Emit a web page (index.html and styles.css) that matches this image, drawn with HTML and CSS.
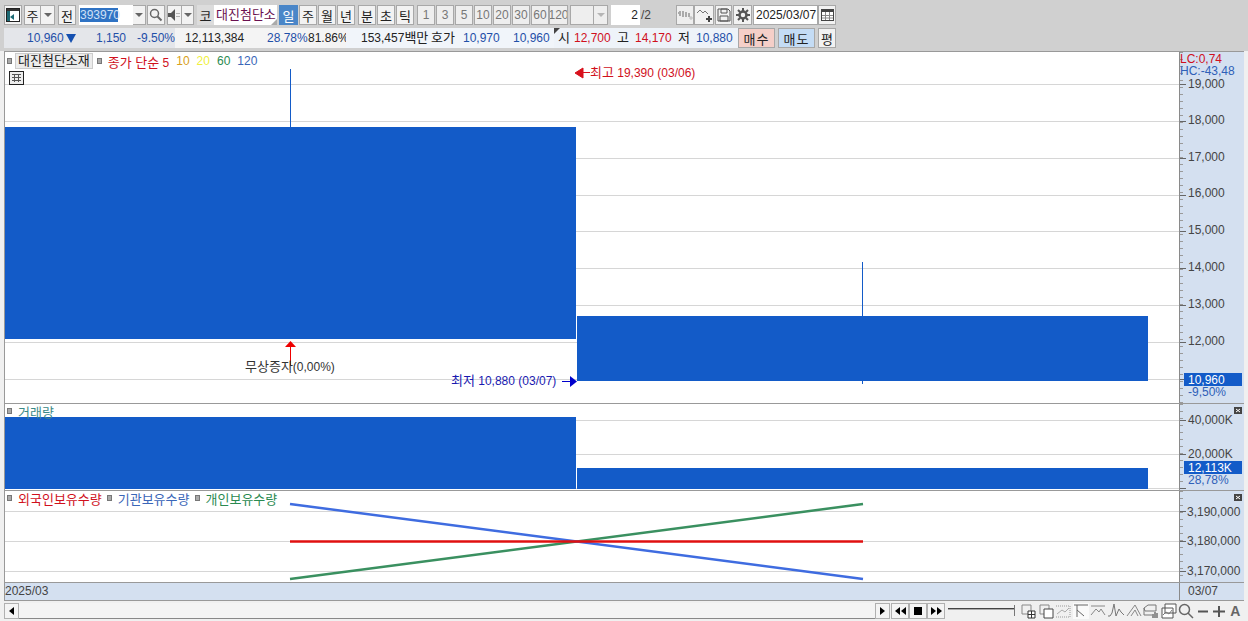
FILE: index.html
```html
<!DOCTYPE html>
<html lang="ko">
<head>
    <meta charset="UTF-8">
    <title>대진첨단소재 차트</title>
    <link rel="stylesheet" href="styles.css">
</head>
<body>
    <div class="toolbar">
        <div class="row row-top">
            <button class="btn w18"><svg width="14" height="14" viewBox="0 0 14 14"><rect x="0.5" y="0.5" width="13" height="13" fill="#fff" stroke="#222"/><rect x="1" y="1" width="12" height="2" fill="#333"/><rect x="1" y="3" width="3" height="10" fill="#1e6a74"/><path d="M4 9l4-3v6z" fill="#1e6a74"/></svg></button>
            <button class="btn w17 m2">주</button>
            <button class="btn dd w14"><i class="caret"></i></button>
            <button class="btn w18 m3">전</button>
            <div class="code m3"><span class="code-sel">393970</span></div>
            <button class="btn dd w13"><i class="caret"></i></button>
            <button class="btn w18 m1"><svg width="14" height="14" viewBox="0 0 14 14"><circle cx="5.5" cy="5.5" r="4" fill="none" stroke="#666" stroke-width="1.5"/><path d="M8.5 8.5l4 4" stroke="#666" stroke-width="2"/></svg></button>
            <button class="btn w15 m2"><svg width="13" height="12" viewBox="0 0 13 12"><path d="M0 4h3l4-4v12l-4-4h-3z" fill="#555"/><path d="M9 4v1M9 7v1M11 4v1M11 7v1" stroke="#777"/></svg></button>
            <button class="btn dd w12"><i class="caret"></i></button>
            <button class="btn btn-grey w17 m3">코</button>
            <div class="name">대진첨단소<i class="name-corner"></i></div>
            <button class="btn btn-on w19 m2">일</button>
            <button class="btn w18 m1">주</button>
            <button class="btn w18 m1">월</button>
            <button class="btn w18 m1">년</button>
            <button class="btn w18 m3">분</button>
            <button class="btn w18 m1">초</button>
            <button class="btn w18 m1">틱</button>
            <button class="btn btn-off w18 m3">1</button>
            <button class="btn btn-off w18 m1">3</button>
            <button class="btn btn-off w18 m1">5</button>
            <button class="btn btn-off w18 m1">10</button>
            <button class="btn btn-off w18 m1">20</button>
            <button class="btn btn-off w18 m1">30</button>
            <button class="btn btn-off w18 m1">60</button>
            <button class="btn btn-off w19">120</button>
            <button class="btn btn-off w24 m2"></button>
            <button class="btn btn-off dd w14"><i class="caret caret-off"></i></button>
            <div class="page m3">2</div>
            <span class="page-total">/2</span>
            <button class="btn btn-off w18 m21"><svg width="16" height="14" viewBox="0 0 16 14"><path d="M1 5h1M3 3v5M6 3v6M9 4v5M12 5v4" stroke="#aaa" stroke-width="2"/><path d="M12 10h4M14 8v4" stroke="#bbb"/></svg></button>
            <button class="btn w20"><svg width="16" height="14" viewBox="0 0 16 14"><path d="M1 5l3-3 3 3 2-2 3 3" fill="none" stroke="#777"/><path d="M10 11h6M13 8v6" stroke="#444" stroke-width="2"/></svg></button>
            <button class="btn w17 m1"><svg width="14" height="14" viewBox="0 0 14 14"><path d="M1 1h10l2 2v10h-12z" fill="none" stroke="#555"/><path d="M4 1h6v4h-6zM3 8h8v5h-8z" fill="none" stroke="#555"/></svg></button>
            <button class="btn w19 m1"><svg width="14" height="14" viewBox="0 0 14 14"><circle cx="7" cy="7" r="3.5" fill="none" stroke="#555" stroke-width="2.5"/><path d="M7 0v3M7 11v3M0 7h3M11 7h3M2 2l2 2M10 10l2 2M12 2l-2 2M2 12l2-2" stroke="#555" stroke-width="2"/></svg></button>
            <div class="date m1">2025/03/07</div>
            <button class="btn w18"><svg width="13" height="12" viewBox="0 0 13 12"><rect x="0.5" y="0.5" width="12" height="11" fill="#fff" stroke="#444"/><rect x="1" y="1" width="11" height="2" fill="#444"/><path d="M1 6.500h11M1 9h11M4.500 3v8M8.500 3v8" stroke="#888"/></svg></button>
        </div>
        <div class="row row-info">
            <div class="cell cell-price">
                <span class="t-blue p-a">10,960</span><i class="down"></i>
                <span class="t-blue p-b">1,150</span>
                <span class="t-blue p-c">-9.50%</span>
            </div>
            <div class="cell cell-vol">
                <span class="p-d">12,113,384</span>
                <span class="t-blue p-e">28.78%</span>
                <span class="p-f">81.86%</span>
            </div>
            <div class="cell cell-quote">
                <span class="p-g">153,457<b class="ko">백만</b></span>
                <span class="p-h ko">호가</span>
                <span class="t-blue p-i">10,970</span>
                <span class="t-blue p-j">10,960</span>
            </div>
            <div class="cell cell-ohl">
                <i class="corner"></i>
                <span class="p-k ko">시</span>
                <span class="t-red p-l">12,700</span>
                <span class="p-m ko">고</span>
                <span class="t-red p-n">14,170</span>
                <span class="p-o ko">저</span>
                <span class="t-blue p-p">10,880</span>
            </div>
            <button class="btn btn-buy">매수</button>
            <button class="btn btn-sell">매도</button>
            <button class="btn w18 m3">평</button>
        </div>
    </div>

    <div class="chart">
        <!-- 가격 -->
        <div class="pane pane-price">
            <div class="plot">
                <div class="legend">
                    <i class="dot"></i><span class="legend-name ko">대진첨단소재</span>
                    <i class="dot"></i><span class="t-red"><b class="ko">종가 단순</b> 5</span>
                    <span class="t-orange period">10</span>
                    <span class="t-yellow period">20</span>
                    <span class="t-green period">60</span>
                    <span class="t-steel period">120</span>
                </div>
                <svg class="table-icon" width="15" height="14" viewBox="0 0 15 14"><rect x="0.5" y="0.5" width="14" height="13" fill="#eee" stroke="#222"/><path d="M3 3.500h9M3 6.500h9M3 9.500h9M5.500 3v8M9.500 3v8" stroke="#555"/></svg>
                <svg class="canvas" width="1175" height="351" viewBox="4 52 1175 351">
                    <path class="grid" d="M5 84.500H1179M5 121.500H1179M5 158.500H1179M5 195.500H1179M5 231.500H1179M5 268.500H1179M5 305.500H1179M5 342.500H1179M5 379.500H1179"/>
                    <rect class="bar" x="5" y="127" width="571" height="212"/>
                    <rect class="bar" x="577" y="316" width="571" height="65"/>
                    <path class="wick" d="M290.500 69V127M862.500 262V384"/>
                    <path d="M583 68v10l-8-5zM583 72.500h7" class="arrow-red"/>
                    <text class="lbl t-red-fill" x="590" y="77"><tspan class="ko">최고</tspan> 19,390 (03/06)</text>
                    <path d="M290.500 365V346" stroke="#e00" fill="none"/>
                    <path d="M285 347l5.500-6 5.500 6z" fill="#e00"/>
                    <text class="lbl t-dark-fill" x="245" y="371"><tspan class="ko">무상증자</tspan>(0,00%)</text>
                    <text class="lbl t-navy-fill" x="451" y="385"><tspan class="ko">최저</tspan> 10,880 (03/07)</text>
                    <path d="M562 381.500h9" stroke="#00c"/>
                    <path d="M570 376l7 5.500-7 5.500z" fill="#00c"/>
                </svg>
            </div>
            <div class="axis">
                <svg class="canvas" width="64" height="351" viewBox="1180 52 64 351">
                    <path class="major" d="M1180 84.500h6M1180 121.500h6M1180 158.500h6M1180 195.500h6M1180 231.500h6M1180 268.500h6M1180 305.500h6M1180 342.500h6M1180 379.500h6"/>
                    <text class="lbl t-red-fill" x="1180" y="63">LC:0,74</text>
                    <text class="lbl t-steel-fill" x="1180" y="75">HC:-43,48</text>
                    <text class="lbl t-axis" x="1188" y="88">19,000</text>
                    <text class="lbl t-axis" x="1188" y="124">18,000</text>
                    <text class="lbl t-axis" x="1188" y="161">17,000</text>
                    <text class="lbl t-axis" x="1188" y="197">16,000</text>
                    <text class="lbl t-axis" x="1188" y="234">15,000</text>
                    <text class="lbl t-axis" x="1188" y="271">14,000</text>
                    <text class="lbl t-axis" x="1188" y="308">13,000</text>
                    <text class="lbl t-axis" x="1188" y="345">12,000</text>
                    <rect class="bar" x="1184" y="373" width="58" height="13"/>
                    <text class="lbl t-white" x="1188" y="384">10,960</text>
                    <text class="lbl t-steel-fill" x="1188" y="396">-9,50%</text>
                </svg>
            </div>
        </div>

        <!-- 거래량 -->
        <div class="pane pane-vol">
            <div class="plot">
                <div class="legend legend-low">
                    <i class="dot"></i><span class="t-teal ko">거래량</span>
                </div>
                <svg class="canvas" width="1175" height="86" viewBox="4 404 1175 86">
                    <path class="grid" d="M5 420.500H1179M5 454.500H1179M5 488.500H1179"/>
                    <rect class="bar" x="5" y="417" width="571" height="72"/>
                    <rect class="bar" x="577" y="468" width="571" height="21"/>
                </svg>
            </div>
            <div class="axis">
                <svg class="canvas" width="64" height="86" viewBox="1180 404 64 86">
                    <path class="major" d="M1180 420.500h6M1180 454.500h6M1180 488.500h6"/>
                    <rect class="close-box" x="1234" y="407" width="8" height="7"/>
                    <path d="M1236 409l4 3M1240 409l-4 3" stroke="#fff"/>
                    <text class="lbl t-axis" x="1188" y="424">40,000K</text>
                    <text class="lbl t-axis" x="1188" y="458">20,000K</text>
                    <rect class="bar" x="1184" y="461" width="58" height="13"/>
                    <text class="lbl t-white" x="1188" y="472">12,113K</text>
                    <text class="lbl t-steel-fill" x="1188" y="484">28,78%</text>
                </svg>
            </div>
        </div>

        <!-- 보유수량 -->
        <div class="pane pane-hold">
            <div class="plot">
                <div class="legend legend-low">
                    <i class="dot"></i><span class="t-red ko">외국인보유수량</span>
                    <i class="dot"></i><span class="t-steel ko">기관보유수량</span>
                    <i class="dot"></i><span class="t-green ko">개인보유수량</span>
                </div>
                <svg class="canvas" width="1175" height="91" viewBox="4 491 1175 91">
                    <path class="grid" d="M5 511.500H1179M5 541.500H1179M5 571.500H1179"/>
                    <path class="hold hold-green" d="M290 579L863 504"/>
                    <path class="hold hold-blue" d="M290 504L863 579"/>
                    <path class="hold hold-red" d="M290 541.500H863"/>
                </svg>
            </div>
            <div class="axis">
                <svg class="canvas" width="64" height="91" viewBox="1180 491 64 91">
                    <path class="major" d="M1180 511.500h6M1180 541.500h6M1180 571.500h6"/>
                    <rect class="close-box" x="1234" y="494" width="8" height="7"/>
                    <path d="M1236 496l4 3M1240 496l-4 3" stroke="#fff"/>
                    <text class="lbl t-axis" x="1187" y="516">3,190,000</text>
                    <text class="lbl t-axis" x="1187" y="545">3,180,000</text>
                    <text class="lbl t-axis" x="1187" y="575">3,170,000</text>
                </svg>
            </div>
        </div>

        <div class="datebar">
            <div class="datebar-left">2025/03</div>
            <div class="datebar-right">03/07</div>
        </div>
    </div>

    <div class="bottom">
        <button class="btn sb w15"><i class="tri-left"></i></button>
        <div class="track"></div>
        <button class="btn sb w15"><i class="tri-right"></i></button>
        <button class="btn sb w18 m1"><svg width="11" height="8" viewBox="0 0 11 8"><path d="M5 0v8l-5-4zM11 0v8l-5-4z"/></svg></button>
        <button class="btn sb w18"><svg width="8" height="8" viewBox="0 0 8 8"><rect width="8" height="8"/></svg></button>
        <button class="btn sb w18"><svg width="11" height="8" viewBox="0 0 11 8"><path d="M0 0v8l5-4zM6 0v8l5-4z"/></svg></button>
        <div class="slider"><i class="slider-line"></i><i class="slider-knob"></i></div>
        <div class="tools">
            <svg width="16" height="16" viewBox="0 0 16 16"><path d="M2 2h9v9H2z" fill="none" stroke="#888"/><path d="M8 8h7v7H8zM8 11.500h7M11.500 8v7" fill="#fff" stroke="#333"/></svg>
            <svg width="16" height="16" viewBox="0 0 16 16"><path d="M2 2h9v9H2z" fill="none" stroke="#888"/><path d="M6 6h9v9H6z" fill="#fff" stroke="#444"/></svg>
            <svg width="16" height="16" viewBox="0 0 16 16"><path d="M1 3h14M1 14h14M15 3v11" fill="none" stroke="#999" stroke-dasharray="1 1"/><path d="M2 11l5-4 3 2 4-4" fill="none" stroke="#aaa"/></svg>
            <svg class="tool-lit" width="16" height="16" viewBox="0 0 16 16"><path d="M1 2h14M4 2v12M4 7l7 6" fill="none" stroke="#666"/></svg>
            <svg width="16" height="16" viewBox="0 0 16 16"><path d="M1 3h14M1 12l5-6 3 3 2-3 4 6" fill="none" stroke="#888"/></svg>
            <svg width="16" height="16" viewBox="0 0 16 16"><path d="M0 13h2l2-3 2-9 2 12 3-7 2 3 3 3" fill="none" stroke="#777"/></svg>
            <svg width="16" height="16" viewBox="0 0 16 16"><path d="M1 13L9 2l6 11M5 13l4-6 3 6" fill="none" stroke="#888"/></svg>
            <svg width="16" height="16" viewBox="0 0 16 16"><path d="M1 5l4-3h8v6H2zM1 5v7h8" fill="none" stroke="#777"/><path d="M10 15v-4M12 15v-6M14 15v-5" stroke="#333"/></svg>
            <svg width="16" height="16" viewBox="0 0 16 16"><path d="M4 1h11v9H4zM1 5h11v10H1z" fill="#fff" stroke="#555"/><path d="M2 12l3-3 3 2 3-4" fill="none" stroke="#777"/></svg>
            <svg width="16" height="16" viewBox="0 0 16 16"><circle cx="6.500" cy="6.500" r="5" fill="none" stroke="#666" stroke-width="1.500"/><path d="M10 10l5 5" stroke="#666" stroke-width="1.500"/></svg>
            <svg width="14" height="16" viewBox="0 0 14 16"><path d="M2 8.500h10" stroke="#555" stroke-width="2"/></svg>
            <svg width="14" height="16" viewBox="0 0 14 16"><path d="M1 8.500h12M7 3v11" stroke="#555" stroke-width="2"/></svg>
            <span class="tool-a">A</span>
        </div>
    </div>
</body>
</html>
```
FILE: styles.css
```css
html, body {
    margin: 0;
    padding: 0;
}
body {
    width: 1248px;
    height: 621px;
    overflow: hidden;
    background-color: #f0f0f0;
    color: #222;
    font-family: "Liberation Sans", "Noto Sans CJK KR", sans-serif;
    font-size: 12px;
}
i {
    display: block;
}
b {
    font-weight: normal;
}
.ko {
    font-size: 13px;
}

/* 상단 툴바 */
.toolbar {
    height: 51px;
    box-sizing: border-box;
    padding: 5px 0 0 4px;
    background-color: #d0d0d0;
}
.row {
    display: flex;
    height: 20px;
}
.row-info {
    margin-top: 3px;
}
.btn {
    display: flex;
    align-items: center;
    justify-content: center;
    flex: none;
    height: 20px;
    margin: 0;
    padding: 0;
    box-sizing: border-box;
    background-color: #f2f2f2;
    border: 1px solid #a8a8a8;
    color: #222;
    font: inherit;
    font-size: 13px;
    overflow: hidden;
}
.btn-off {
    background-color: #eeeeee;
    color: #777;
    font-size: 12px;
}
.btn-grey {
    background-color: #dcdcdc;
    border-color: #dcdcdc;
}
.btn-on {
    background-color: #4a86c8;
    border-color: #4a86c8;
    color: #fff;
}
.dd {
    border-left: 0;
}
.caret {
    width: 0;
    height: 0;
    border-left: 4px solid transparent;
    border-right: 4px solid transparent;
    border-top: 4px solid #666;
}
.caret-off {
    border-top-color: #b5b5b5;
}
.w12 { width: 12px; }
.w13 { width: 13px; }
.w14 { width: 14px; }
.w15 { width: 15px; }
.w17 { width: 17px; }
.w18 { width: 18px; }
.w19 { width: 19px; }
.w20 { width: 20px; }
.w24 { width: 24px; }
.m1 { margin-left: 1px; }
.m2 { margin-left: 2px; }
.m3 { margin-left: 3px; }
.m21 { margin-left: 21px; }

.code {
    width: 54px;
    height: 20px;
    box-sizing: border-box;
    padding-top: 3px;
    background-color: #fff;
}
.code-sel {
    display: inline-block;
    width: 38px;
    height: 14px;
    margin-left: 1px;
    background-color: #2f73c4;
    color: #cfe0f5;
    line-height: 14px;
}
.name {
    position: relative;
    width: 63px;
    height: 20px;
    box-sizing: border-box;
    padding-left: 2px;
    background-color: #fff;
    color: #6a1050;
    font-size: 13px;
    line-height: 20px;
    white-space: nowrap;
    overflow: hidden;
}
.name-corner {
    position: absolute;
    right: 0;
    bottom: 0;
    border-left: 6px solid transparent;
    border-bottom: 6px solid #aaa;
}
.page {
    width: 29px;
    height: 20px;
    box-sizing: border-box;
    padding-right: 2px;
    background-color: #fff;
    text-align: right;
    line-height: 20px;
}
.page-total {
    width: 14px;
    line-height: 20px;
    margin-left: 1px;
    color: #444;
}
.date {
    width: 65px;
    height: 20px;
    box-sizing: border-box;
    padding-left: 2px;
    background-color: #fff;
    border: 1px solid #a8a8a8;
    line-height: 18px;
    white-space: nowrap;
}

/* 시세 줄 */
.cell {
    position: relative;
    flex: none;
    height: 20px;
    line-height: 20px;
    white-space: nowrap;
}
.cell span,
.down,
.corner {
    position: absolute;
    top: 0;
}
.cell-price {
    width: 171px;
    background-color: #e4e6ea;
}
.cell-vol {
    width: 171px;
    background-color: #f4f4f4;
}
.cell-quote {
    width: 208px;
    background-color: #f1f5fa;
}
.cell-ohl {
    width: 184px;
    background-color: #eef3f9;
}
.p-a { left: 23px; }
.down {
    left: 62px;
    top: 6px;
    border-left: 5px solid transparent;
    border-right: 5px solid transparent;
    border-top: 9px solid #1450b0;
}
.p-b { left: 92px; }
.p-c { left: 133px; }
.p-d { left: 10px; }
.p-e { left: 92px; }
.p-f { left: 133px; }
.p-g { left: 15px; }
.p-h { left: 85px; }
.p-i { left: 117px; }
.p-j { left: 167px; }
.corner {
    left: 0;
    top: 0;
    border-right: 6px solid transparent;
    border-top: 6px solid #444;
}
.p-k { left: 4px; }
.p-l { left: 20px; }
.p-m { left: 63px; }
.p-n { left: 81px; }
.p-o { left: 124px; }
.p-p { left: 142px; }
.btn-buy,
.btn-sell {
    width: 37px;
    letter-spacing: 1px;
}
.btn-buy {
    background-color: #f5cfc8;
}
.btn-sell {
    margin-left: 3px;
    background-color: #c4dcf5;
}
.t-blue { color: #1f4fa8; }
.t-red { color: #d0101c; }
.t-orange { color: #d8a020; }
.t-yellow { color: #f0f040; }
.t-green { color: #2a8a50; }
.t-steel { color: #3a66b8; }
.t-teal { color: #3a8a88; }

/* 차트 */
.chart {
    margin-left: 4px;
    width: 1240px;
    border-top: 1px solid #999;
    background-color: #fff;
    box-shadow: inset 1px 0 #999;
}
.pane {
    display: flex;
    border-bottom: 1px solid #999;
}
.pane-price { height: 351px; }
.pane-vol { height: 86px; }
.pane-hold { height: 91px; }
.plot {
    position: relative;
    width: 1175px;
    border-right: 1px solid #8a8a8a;
    overflow: hidden;
}
.axis {
    position: relative;
    width: 64px;
    background-color: #d4e0f0;
    background-image: repeating-linear-gradient(#9a9a9a 0 1px, transparent 1px 7px);
    background-size: 3px 100%;
    background-repeat: no-repeat;
    overflow: hidden;
}
.canvas {
    display: block;
}
.legend {
    position: absolute;
    z-index: 2;
    top: 0;
    left: 3px;
    display: flex;
    align-items: center;
    gap: 5px;
    height: 18px;
    white-space: nowrap;
}
.legend-low {
    top: -2px;
}
.legend-name {
    margin: 0 -1px 0 -3px;
    padding: 0 2px;
    background-color: #ececec;
    border: 1px solid #ccc;
    line-height: 14px;
}
.period {
    margin-left: 2px;
}
.dot {
    width: 3px;
    height: 4px;
    margin-right: 1px;
    background-color: #aaa;
    border: 1px solid #777;
}
.table-icon {
    position: absolute;
    z-index: 2;
    top: 19px;
    left: 5px;
}
.grid {
    stroke: #d6d6d6;
    fill: none;
}
.bar {
    fill: #135bc8;
}
.wick {
    stroke: #135bc8;
    fill: none;
}
.major {
    stroke: #666;
    fill: none;
}
.lbl {
    font-size: 12px;
}
.lbl .ko {
    font-size: 13px;
}
.arrow-red {
    fill: #d8101c;
    stroke: #d8101c;
}
.t-red-fill { fill: #d0101c; }
.t-dark-fill { fill: #333; }
.t-navy-fill { fill: #1a1ab0; }
.t-steel-fill { fill: #2f60b8; }
.t-axis { fill: #444; }
.t-white { fill: #fff; }
.close-box { fill: #444; }
.hold {
    fill: none;
    stroke-width: 2.5;
}
.hold-red { stroke: #e01010; }
.hold-blue { stroke: #3f6ce0; }
.hold-green { stroke: #3a9060; }
.datebar {
    display: flex;
    height: 17px;
    background-color: #d4e0f0;
    line-height: 16px;
    color: #444;
    border-bottom: 1px solid #999;
    box-shadow: inset 1px 0 #999;
}
.datebar-left {
    width: 1174px;
    padding-left: 1px;
    border-right: 1px solid #8a8a8a;
}
.datebar-right {
    padding-left: 8px;
}

/* 하단 스크롤 */
.bottom {
    display: flex;
    align-items: center;
    height: 17px;
    margin-top: 1px;
    padding-left: 4px;
}
.sb {
    height: 16px;
    background-color: #f4f4f4;
    border-color: #b0b0b0;
}
.tri-left,
.tri-right {
    width: 0;
    height: 0;
    border-top: 4px solid transparent;
    border-bottom: 4px solid transparent;
}
.tri-left { border-right: 5px solid #000; }
.tri-right { border-left: 5px solid #000; }
.track {
    width: 856px;
    height: 16px;
    background-color: #f4f4f4;
    border-bottom: 1px solid #888;
    box-sizing: border-box;
}
.slider {
    position: relative;
    width: 72px;
    height: 16px;
    margin-left: 3px;
}
.slider-line {
    position: absolute;
    top: 5px;
    left: 0;
    width: 66px;
    height: 1px;
    background-color: #444;
    border-bottom: 1px solid #aaa;
}
.slider-knob {
    position: absolute;
    top: 2px;
    left: 66px;
    width: 1px;
    height: 11px;
    background-color: #777;
}
.tools {
    display: flex;
    align-items: center;
    gap: 1.6px;
    color: #555;
}
.tool-lit {
    background-color: #fafafa;
}
.tool-a {
    margin-left: 3px;
    font-size: 14px;
    font-weight: bold;
    color: #666;
}
```
